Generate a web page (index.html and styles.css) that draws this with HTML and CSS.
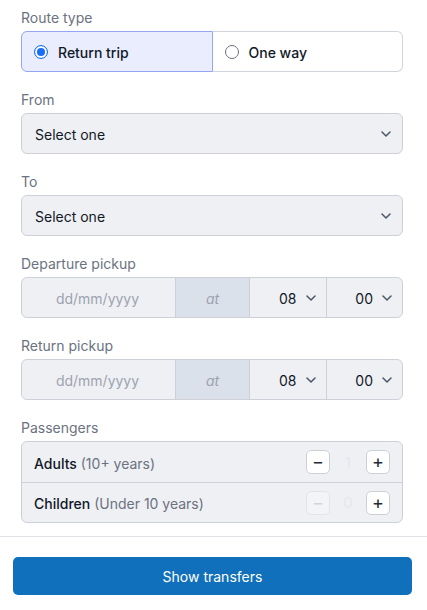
FILE: index.html
```html
<!DOCTYPE html>
<html lang="en">
<head>
    <meta charset="UTF-8">
    <meta name="viewport" content="width=device-width, initial-scale=1.0">
    <title>Transfers</title>
    <link rel="stylesheet" href="styles.css">
</head>
<body>
    <form class="search">
        <div class="field">
            <p class="label">Route type</p>
            <div class="route">
                <label class="route-opt active">
                    <span class="radio checked"></span>
                    <span>Return trip</span>
                </label>
                <label class="route-opt">
                    <span class="radio"></span>
                    <span>One way</span>
                </label>
            </div>
        </div>

        <div class="field">
            <p class="label">From</p>
            <div class="select">
                <span>Select one</span>
                <svg class="chev" width="10" height="6" viewBox="0 0 10 6"><path d="M1 1l4 4 4-4" fill="none" stroke="#4b5563" stroke-width="1.5" stroke-linecap="round" stroke-linejoin="round"/></svg>
            </div>
        </div>

        <div class="field">
            <p class="label">To</p>
            <div class="select">
                <span>Select one</span>
                <svg class="chev" width="10" height="6" viewBox="0 0 10 6"><path d="M1 1l4 4 4-4" fill="none" stroke="#4b5563" stroke-width="1.5" stroke-linecap="round" stroke-linejoin="round"/></svg>
            </div>
        </div>

        <div class="field">
            <p class="label">Departure pickup</p>
            <div class="pickup">
                <span class="date">dd/mm/yyyy</span>
                <span class="at">at</span>
                <span class="time">08 <svg width="10" height="6" viewBox="0 0 10 6"><path d="M1 1l4 4 4-4" fill="none" stroke="#4b5563" stroke-width="1.5" stroke-linecap="round" stroke-linejoin="round"/></svg></span>
                <span class="time">00 <svg width="10" height="6" viewBox="0 0 10 6"><path d="M1 1l4 4 4-4" fill="none" stroke="#4b5563" stroke-width="1.5" stroke-linecap="round" stroke-linejoin="round"/></svg></span>
            </div>
        </div>

        <div class="field">
            <p class="label">Return pickup</p>
            <div class="pickup">
                <span class="date">dd/mm/yyyy</span>
                <span class="at">at</span>
                <span class="time">08 <svg width="10" height="6" viewBox="0 0 10 6"><path d="M1 1l4 4 4-4" fill="none" stroke="#4b5563" stroke-width="1.5" stroke-linecap="round" stroke-linejoin="round"/></svg></span>
                <span class="time">00 <svg width="10" height="6" viewBox="0 0 10 6"><path d="M1 1l4 4 4-4" fill="none" stroke="#4b5563" stroke-width="1.5" stroke-linecap="round" stroke-linejoin="round"/></svg></span>
            </div>
        </div>

        <div class="field">
            <p class="label">Passengers</p>
            <div class="pax">
                <div class="pax-row">
                    <p><b>Adults</b> <span>(10+ years)</span></p>
                    <div class="counter">
                        <button type="button" class="step">&minus;</button>
                        <span class="num">1</span>
                        <button type="button" class="step">+</button>
                    </div>
                </div>
                <div class="pax-row">
                    <p><b>Children</b> <span>(Under 10 years)</span></p>
                    <div class="counter">
                        <button type="button" class="step off">&minus;</button>
                        <span class="num">0</span>
                        <button type="button" class="step">+</button>
                    </div>
                </div>
            </div>
        </div>
    </form>

    <div class="footer">
        <button class="submit">Show transfers</button>
    </div>
</body>
</html>
```

FILE: styles.css
```css
* {
    margin: 0;
    padding: 0;
    box-sizing: border-box;
}

body {
    font-family: Inter, "Liberation Sans", sans-serif;
    font-size: 14px;
    color: #111827;
    background-color: #fff;
}

.search {
    padding: 8px 24px 0 21px;
}

.field {
    margin-bottom: 18px;
}

.label {
    line-height: 19px;
    margin-bottom: 4px;
    color: #6b7280;
}

/* route type */
.route {
    display: flex;
    height: 41px;
}

.route-opt {
    flex: 1;
    display: flex;
    align-items: center;
    gap: 10px;
    padding-left: 12px;
    padding-top: 1px;
    font-weight: 500;
    border: 1px solid #d1d5db;
    border-left: none;
    border-radius: 0 6px 6px 0;
}

.route-opt.active {
    background-color: #e9edfd;
    border: 1px solid #93a5f3;
    border-radius: 6px 0 0 6px;
}

.radio {
    width: 14px;
    height: 14px;
    border: 1.5px solid #6b7280;
    border-radius: 50%;
    background: #fff;
}

.radio.checked {
    border-color: #1a6dfa;
    box-shadow: inset 0 0 0 2px #fff, inset 0 0 0 6px #1a6dfa;
}

/* selects */
.select {
    display: flex;
    align-items: center;
    justify-content: space-between;
    height: 41px;
    padding: 1px 11px 0 13px;
    background-color: #eff0f4;
    border: 1px solid #cdd0d7;
    border-radius: 6px;
}

/* pickup */
.pickup {
    display: flex;
    height: 41px;
    background-color: #eff0f4;
    border: 1px solid #cdd0d7;
    border-radius: 6px;
    overflow: hidden;
}

.pickup > span {
    display: flex;
    align-items: center;
    padding-top: 1px;
}

.date {
    width: 153px;
    justify-content: center;
    color: #9ca3af;
    padding-right: 2px;
}

.at {
    width: 75px;
    justify-content: center;
    background-color: #dae1ea;
    border-left: 1px solid #cdd0d7;
    border-right: 1px solid #cdd0d7;
    color: #9ca3af;
    font-style: italic;
}

.time {
    flex: 1;
    justify-content: flex-end;
    gap: 9px;
    padding-right: 10px;
}

.time + .time {
    border-left: 1px solid #cdd0d7;
}

/* passengers */
.pax {
    background-color: #eff0f4;
    border: 1px solid #cdd0d7;
    border-radius: 6px;
}

.pax-row {
    display: flex;
    align-items: center;
    justify-content: space-between;
    height: 40px;
    padding: 0 12px 0 12px;
}

.pax-row p {
    padding-top: 2px;
}

.pax-row + .pax-row {
    border-top: 1px solid #cdd0d7;
}

.pax-row b {
    font-weight: 500;
}

.pax-row p span {
    color: #6b7280;
}

.counter {
    display: flex;
    align-items: center;
}

.step {
    width: 24px;
    height: 24px;
    border: 1px solid #cdd0d7;
    border-radius: 5px;
    background-color: #fff;
    color: #1f2937;
    font-family: inherit;
    font-size: 18px;
    line-height: 20px;
}

.step.off {
    background-color: #f3f4f6;
    color: #d1d5db;
    border-color: #e2e4e9;
}

.num {
    min-width: 36px;
    text-align: center;
    color: #e5e7eb;
    font-size: 15px;
}

/* footer */
.footer {
    margin-top: -5px;
    border-top: 1px solid #e0e0e5;
    padding: 20px 15px 15px 13px;
}

.submit {
    display: block;
    width: 100%;
    height: 38px;
    border: none;
    border-radius: 5px;
    background-color: #1170bb;
    color: #fff;
    font-family: inherit;
    font-size: 14px;
}
```
